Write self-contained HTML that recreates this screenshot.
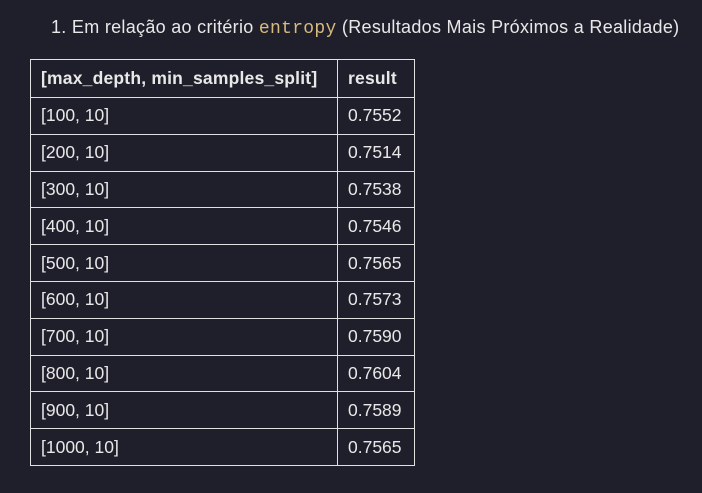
<!DOCTYPE html>
<html><head><style>
html,body{margin:0;padding:0;background:#1f1f2b;width:702px;height:493px;overflow:hidden;}
body{font-family:"Liberation Sans",sans-serif;color:#e8e8e8;font-size:16px;}
.t{position:absolute;left:51px;top:17px;font-size:18px;white-space:nowrap;letter-spacing:0.3px}
code{font-family:"Liberation Mono",monospace;color:#d7ba7d;font-size:18px}
table{position:absolute;left:30px;top:59px;border-collapse:collapse;table-layout:fixed;width:385px}
td,th{border:1px solid #e0e0e0;padding:0 0 0 10px;text-align:left;height:35.8px;font-size:17.5px;white-space:nowrap;overflow:hidden}
th{height:37px;font-weight:bold;letter-spacing:0.2px}
td:first-child,th:first-child{width:296px}
</style></head><body>
<div class="t">1. Em relação ao critério <code>entropy</code> (Resultados Mais Próximos a Realidade)</div>
<table>
<tr><th>[max_depth, min_samples_split]</th><th>result</th></tr>
<tr><td>[100, 10]</td><td>0.7552</td></tr>
<tr><td>[200, 10]</td><td>0.7514</td></tr>
<tr><td>[300, 10]</td><td>0.7538</td></tr>
<tr><td>[400, 10]</td><td>0.7546</td></tr>
<tr><td>[500, 10]</td><td>0.7565</td></tr>
<tr><td>[600, 10]</td><td>0.7573</td></tr>
<tr><td>[700, 10]</td><td>0.7590</td></tr>
<tr><td>[800, 10]</td><td>0.7604</td></tr>
<tr><td>[900, 10]</td><td>0.7589</td></tr>
<tr><td>[1000, 10]</td><td>0.7565</td></tr>
</table>
</body></html>
